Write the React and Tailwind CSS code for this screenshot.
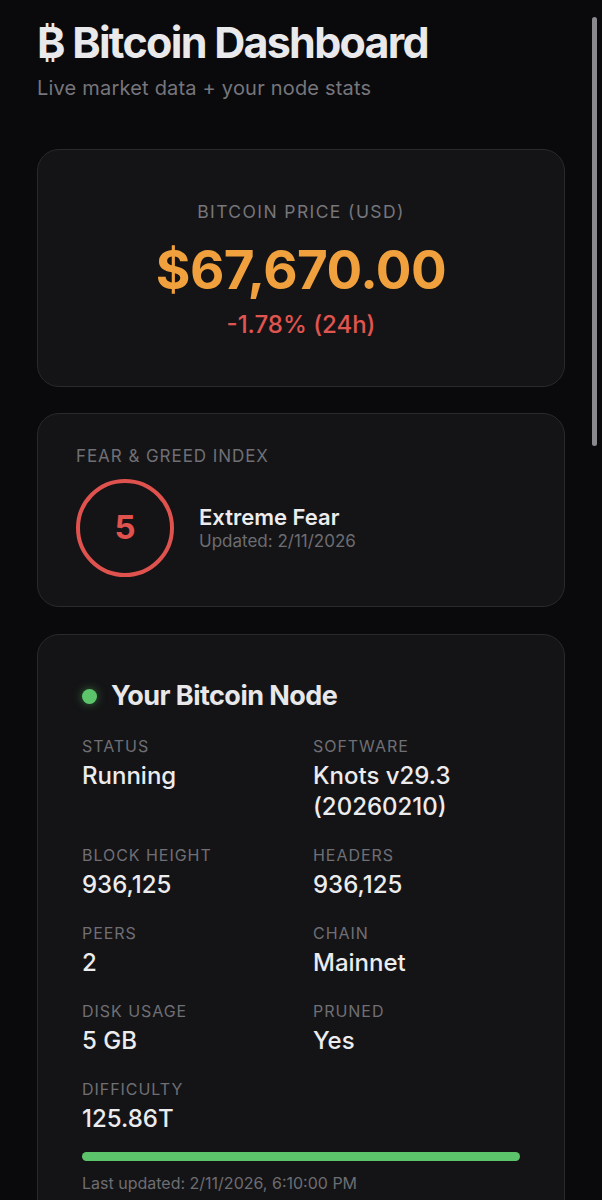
import React from 'react';

const stats = [
  { label: 'Status', value: 'Running' },
  { label: 'Software', value: 'Knots v29.3 (20260210)' },
  { label: 'Block Height', value: '936,125' },
  { label: 'Headers', value: '936,125' },
  { label: 'Peers', value: '2' },
  { label: 'Chain', value: 'Mainnet' },
  { label: 'Disk Usage', value: '5 GB' },
  { label: 'Pruned', value: 'Yes' },
  { label: 'Difficulty', value: '125.86T' },
];

function Stat({ label, value }) {
  return (
    <div className="flex flex-col">
      <span className="text-[16px] leading-[20px] uppercase tracking-[0.06em] text-[#6f6f75]">{label}</span>
      <span className="mt-[4px] text-[24px] leading-[31px] font-medium text-[#ececee]">{value}</span>
    </div>
  );
}

export default function App() {
  return (
    <div className="min-h-screen bg-[#0a0a0c] px-[37px] pt-[16px] pb-[40px] font-['Inter',sans-serif]">
      {/* scroll indicator */}
      <div className="fixed right-[5px] top-[17px] h-[429px] w-[5px] rounded-full bg-[#8a8a8e]" />

      {/* Header */}
      <h1 className="text-[43px] leading-[52px] font-bold tracking-[-0.04em] text-[#e9e9ec]">
        ₿ Bitcoin Dashboard
      </h1>
      <p className="mt-[7px] text-[20px] leading-[26px] tracking-[0.01em] text-[#76767c]">Live market data + your node stats</p>

      {/* Price */}
      <div className="mt-[48px] rounded-[22px] border border-[#2a2a2e] bg-[#141416] pt-[51px] pb-[47px] flex flex-col items-center">
        <span className="text-[17.5px] leading-[22px] uppercase tracking-[0.08em] text-[#76767c]">Bitcoin Price (USD)</span>
        <span className="mt-[21px] text-[53px] leading-[52px] font-bold tracking-[-0.01em] text-[#f0a03c]">$67,670.00</span>
        <span className="mt-[15px] text-[24px] leading-[28px] font-medium text-[#e0554f]">-1.78% (24h)</span>
      </div>

      {/* Fear & Greed */}
      <div className="mt-[26px] rounded-[22px] border border-[#2a2a2e] bg-[#141416] px-[38px] pt-[32px] pb-[29px]">
        <div className="text-[17px] leading-[20px] uppercase tracking-[0.055em] text-[#6f6f75]">Fear &amp; Greed Index</div>
        <div className="mt-[13px] flex items-center gap-[25px]">
          <div className="flex h-[98px] w-[98px] items-center justify-center rounded-full border-[4px] border-[#e0524d]">
            <span className="text-[33px] font-bold text-[#e0524d]">5</span>
          </div>
          <div className="flex flex-col">
            <span className="text-[22px] leading-[27px] font-semibold text-[#ececee]">Extreme Fear</span>
            <span className="text-[17px] leading-[21px] text-[#6d6d72]">Updated: 2/11/2026</span>
          </div>
        </div>
      </div>

      {/* Node */}
      <div className="mt-[27px] rounded-[22px] border border-[#2a2a2e] bg-[#141416] px-[44px] pt-[45px] pb-[40px]">
        <div className="flex items-center gap-[14px]">
          <span className="h-[15px] w-[15px] rounded-full bg-[#5cc46a] shadow-[0_0_10px_rgba(92,196,106,0.5)]" />
          <h2 className="text-[27px] leading-[32px] font-bold tracking-[-0.02em] text-[#e8e8ea]">Your Bitcoin Node</h2>
        </div>
        <div className="mt-[24px] grid grid-cols-2 gap-x-[24px] gap-y-[23px]">
          {stats.map((s) => (
            <Stat key={s.label} label={s.label} value={s.value} />
          ))}
        </div>
        <div className="mt-[18px] h-[9px] w-full rounded-full bg-[#5cc46a]" />
        <div className="mt-[12px] text-[16px] leading-[20px] text-[#6d6d72]">Last updated: 2/11/2026, 6:10:00 PM</div>
      </div>
    </div>
  );
}
